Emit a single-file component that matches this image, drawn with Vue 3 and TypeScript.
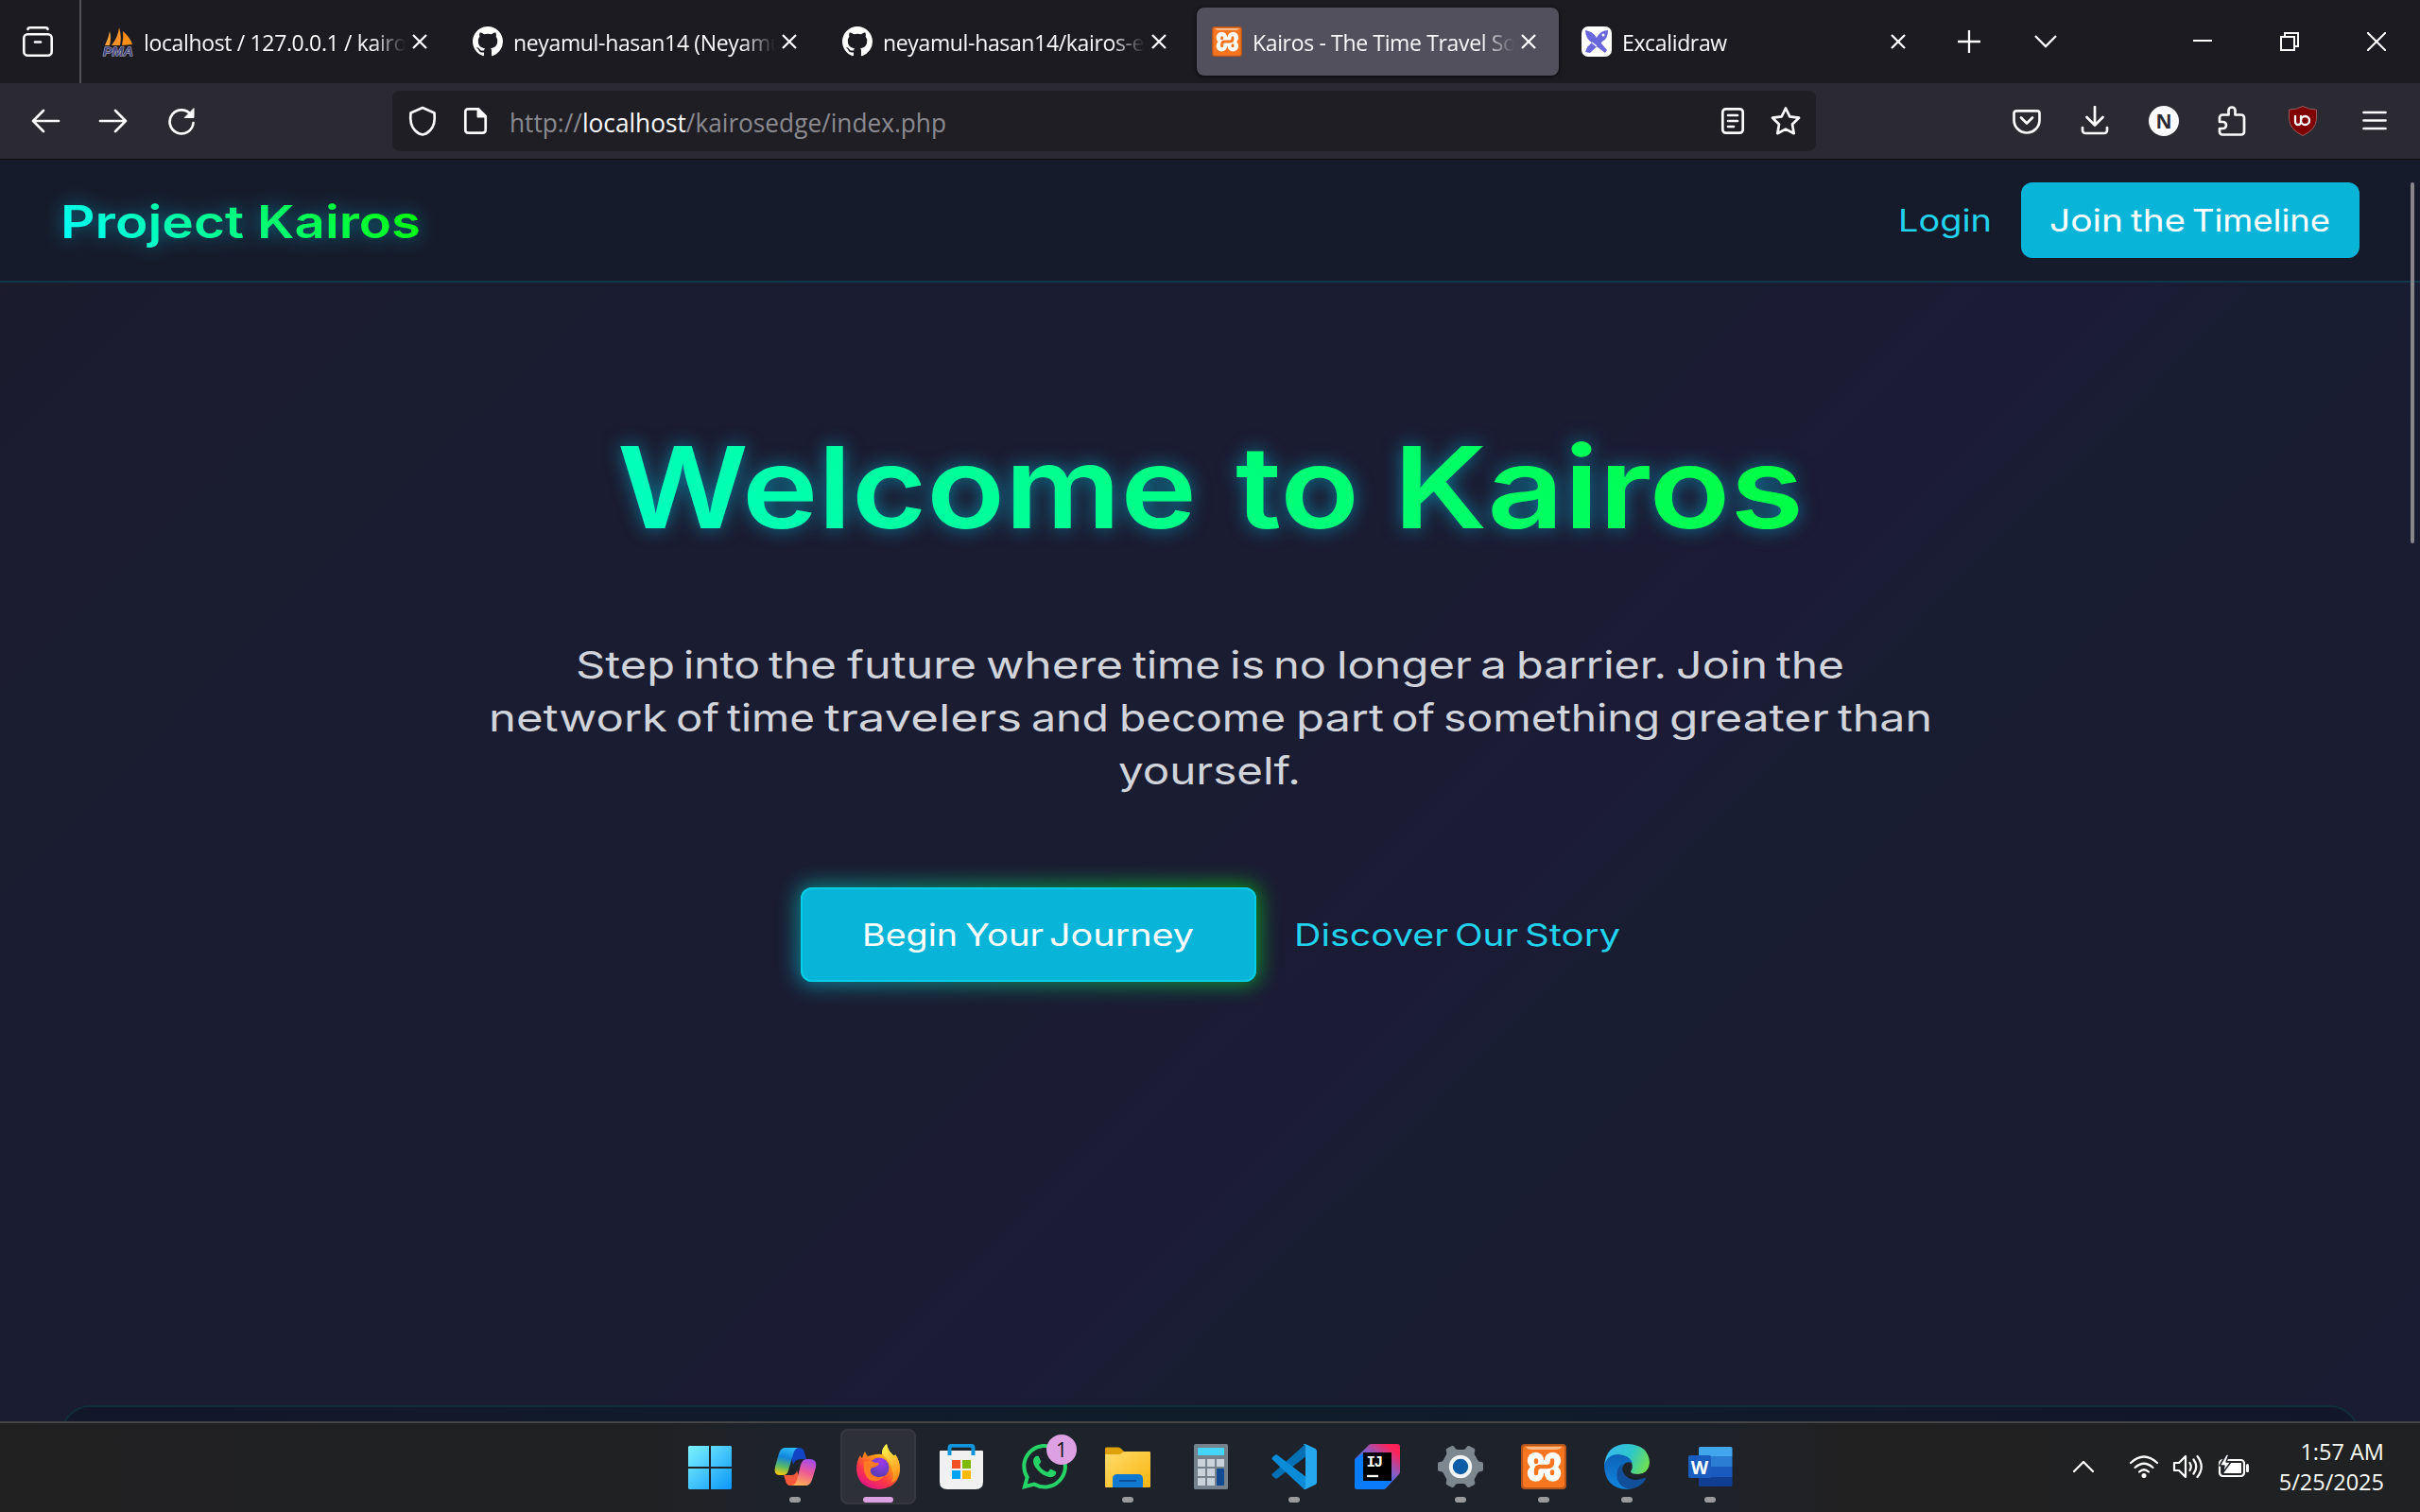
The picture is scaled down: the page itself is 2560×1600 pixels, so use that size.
<script setup lang="ts">
import { h } from 'vue'

type Word = [text: string, x: number, width: number]

// Sets each word at its own measure so the stretched lettering keeps its rhythm.
const Words = (props: { items: Word[]; y: number }) =>
  h(
    'g',
    props.items.map(([text, x, width]) =>
      h('text', { x: x - 2, y: props.y, textLength: width + 4, lengthAdjust: 'spacingAndGlyphs' }, text),
    ),
  )
Words.props = ['items', 'y']

const tabs = [
  { icon: 'pma', title: 'localhost / 127.0.0.1 / kairosedge', active: false },
  { icon: 'github', title: 'neyamul-hasan14 (Neyamul Hasan)', active: false },
  { icon: 'github', title: 'neyamul-hasan14/kairos-edge', active: false },
  { icon: 'xampp', title: 'Kairos - The Time Travel Society', active: true },
  { icon: 'excalidraw', title: 'Excalidraw', active: false },
]

const logo: Word[] = [['Project', 66, 190], ['Kairos', 274, 169]]
const login: Word[] = [['Login', 2010, 95]]
const join: Word[] = [['Join', 2170, 74], ['the', 2256, 54], ['Timeline', 2321, 142]]
const headline: Word[] = [['Welcome', 655, 609], ['to', 1309, 127], ['Kairos', 1476, 430]]
const intro: { y: number; words: Word[] }[] = [
  { y: 718, words: [['Step', 611, 101], ['into', 725, 77], ['the', 815, 68], ['future', 898, 133], ['where', 1045, 141], ['time', 1200, 89], ['is', 1303, 33], ['no', 1349, 52], ['longer', 1416, 139], ['a', 1568, 24], ['barrier.', 1606, 155], ['Join', 1775, 93], ['the', 1881, 68]] },
  { y: 774, words: [['network', 519, 185], ['of', 717, 42], ['time', 771, 89], ['travelers', 874, 205], ['and', 1093, 78], ['become', 1186, 172], ['part', 1373, 89], ['of', 1474, 42], ['something', 1529, 225], ['greater', 1768, 165], ['than', 1946, 96]] },
  { y: 830, words: [['yourself.', 1185, 189]] },
]
const begin: Word[] = [['Begin', 914, 97], ['Your', 1023, 79], ['Journey', 1112, 149]]
const discover: Word[] = [['Discover', 1371, 159], ['Our', 1541, 63], ['Story', 1615, 97]]

const apps = [
  { id: 'copilot', run: true }, { id: 'firefox', run: false, active: true }, { id: 'store' }, { id: 'whatsapp' },
  { id: 'files', run: true }, { id: 'calc' }, { id: 'code', run: true }, { id: 'idea' },
  { id: 'settings', run: true }, { id: 'xampp', run: true }, { id: 'edge', run: true }, { id: 'word', run: true },
]
</script>

<template>
  <div class="screen">
    <div class="tabbar">
      <div class="view">
        <svg width="32" height="32" viewBox="0 0 32 32" fill="none" stroke="#fbfbfe" stroke-width="2.6" stroke-linecap="round">
          <path d="M5.500 3V3a2 2 0 0 1 2-1.700h17a2 2 0 0 1 2 1.700" /><rect x="1.300" y="8.300" width="29.400" height="22.400" rx="4" /><path d="M13 16.500h6" />
        </svg>
      </div>
      <div class="tabs">
        <div v-for="(t, i) in tabs" :key="i" class="tab" :class="{ active: t.active }">
          <svg v-if="t.icon === 'github'" class="fav" viewBox="0 0 16 16" fill="#fff"><path d="M8 0C3.58 0 0 3.58 0 8c0 3.54 2.29 6.53 5.47 7.59.4.07.55-.17.55-.38 0-.19-.01-.82-.01-1.49-2.01.37-2.53-.49-2.69-.94-.09-.23-.48-.94-.82-1.13-.28-.15-.68-.52-.01-.53.63-.01 1.08.58 1.23.82.72 1.21 1.87.87 2.33.66.07-.52.28-.87.51-1.07-1.78-.2-3.64-.89-3.64-3.95 0-.87.31-1.59.82-2.15-.08-.2-.36-1.02.08-2.12 0 0 .67-.21 2.2.82.64-.18 1.32-.27 2-.27s1.36.09 2 .27c1.53-1.04 2.2-.82 2.2-.82.44 1.1.16 1.92.08 2.12.51.56.82 1.27.82 2.15 0 3.07-1.87 3.75-3.65 3.95.29.25.54.73.54 1.48 0 1.07-.01 1.93-.01 2.2 0 .21.15.46.55.38A8.01 8.01 0 0 0 16 8c0-4.42-3.58-8-8-8z" /></svg>
          <svg v-else-if="t.icon === 'pma'" class="fav" viewBox="0 0 32 32">
            <path d="M2 20Q6 12 7 5Q9 12 7 20Z" fill="#f9a13a" /><path d="M9 20Q16 11 17 1Q20 11 18 20Z" fill="#f7922a" /><path d="M20 20Q22 12 21 5Q29 12 31 19Z" fill="#f98d16" />
            <text x="0" y="30.500" textLength="32" lengthAdjust="spacingAndGlyphs" class="pma">PMA</text>
          </svg>
          <svg v-else-if="t.icon === 'xampp'" class="fav" viewBox="0 0 48 48"><use href="#xampp" /></svg>
          <svg v-else class="fav" viewBox="0 0 32 32">
            <rect width="32" height="32" rx="7" fill="#fff" />
            <path d="M4 4Q12 5 16 12L27 25L25 28L12 18Q4 13 4 4Z" fill="#6965db" /><path d="M28 4Q28 13 22 16L9 28L4 27L6 22L16 12Q20 4 28 4Z" fill="#6965db" /><circle cx="23" cy="9" r="1.500" fill="#fff" /><path d="M11 17L16 21" stroke="#fff" stroke-width="1.300" />
          </svg>
          <span class="title">{{ t.title }}</span>
          <svg class="x" viewBox="0 0 16 16"><path d="M1 1L15 15M15 1L1 15" /></svg>
        </div>
      </div>
      <svg class="plus" width="24" height="24" viewBox="0 0 24 24"><path d="M12 0V24M0 12H24" /></svg>
      <svg class="down" width="26" height="16" viewBox="0 0 26 16"><path d="M2 2L13 13L24 2" /></svg>
      <div class="wincontrols">
        <svg width="20" height="20" viewBox="0 0 20 20"><path d="M0 9H20" /></svg>
        <svg width="20" height="20" viewBox="0 0 20 20"><path d="M1 5H15V19H1ZM5 5V1H19V15H15" /></svg>
        <svg width="20" height="20" viewBox="0 0 20 20"><path d="M0 0L20 20M20 0L0 20" /></svg>
      </div>
    </div>

    <div class="toolbar">
      <div class="nav">
        <svg viewBox="0 0 32 32"><path d="M30 16H3M14 5L3 16L14 27" /></svg>
        <svg viewBox="0 0 32 32"><path d="M2 16H29M18 5L29 16L18 27" /></svg>
        <svg viewBox="0 0 32 32"><path d="M26.500 10A12.500 12.500 0 1 0 28.500 18" /><path d="M29 3V12.500H19.500Z" fill="#fbfbfe" stroke-width="1" /></svg>
      </div>
      <div class="urlbar">
        <svg class="ic" viewBox="0 0 32 32"><path d="M16 2L28.500 7.500Q30 20 24 26Q20 30 16 30.500Q12 30 8 26Q2 20 3.500 7.500Z" /></svg>
        <svg class="ic page" viewBox="0 0 32 32"><path d="M8 3.300H19L26.700 11V25.700a3 3 0 0 1-3 3H8.300a3 3 0 0 1-3-3V6a2.700 2.700 0 0 1 2.700-2.700Z" /><path d="M18 3V12H27Z" fill="#fbfbfe" stroke-width="1" /></svg>
        <svg class="url" width="480" height="64" viewBox="536 96 480 64"><text x="539" y="140" textLength="462" lengthAdjust="spacingAndGlyphs">http://<tspan fill="#fbfbfe">localhost</tspan>/kairosedge/index.php</text></svg>
        <svg class="ic reader" viewBox="0 0 32 32"><rect x="5.300" y="3.300" width="21.400" height="25.400" rx="3.500" /><path d="M11 10H21M11 16H21M11 22H17" /></svg>
        <svg class="ic" viewBox="0 0 32 32"><path d="M16 2.500L20.300 11.300L30 12.700L23 19.500L24.700 29.200L16 24.600L7.300 29.200L9 19.500L2 12.700L11.700 11.300Z" /></svg>
      </div>
      <div class="ext">
        <svg viewBox="0 0 32 32"><path d="M5 5.300H27a2.500 2.500 0 0 1 2.500 2.500V15a13.500 13.500 0 0 1-27 0V7.800A2.500 2.500 0 0 1 5 5.300Z" /><path d="M10 12.500L16 18.500L22 12.500" /></svg>
        <svg viewBox="0 0 32 32"><path d="M16 1V20M7.500 12L16 20.500L24.500 12M3 23V26a3 3 0 0 0 3 3H26a3 3 0 0 0 3-3V23" /></svg>
        <svg viewBox="0 0 32 32"><circle cx="16" cy="16" r="16" fill="#fbfbfe" stroke="none" /><text x="16" y="23.500" text-anchor="middle" class="n">N</text></svg>
        <svg viewBox="0 0 32 32"><path d="M12.500 9.500V5a3.500 3.500 0 0 1 7 0V9.500H26a3 3 0 0 1 3 3V27.500a3 3 0 0 1-3 3H6a3 3 0 0 1-3-3V24H6.500a3.500 3.500 0 0 0 0-7H3V12.500a3 3 0 0 1 3-3Z" /></svg>
        <svg class="ublock" viewBox="0 0 32 32"><path d="M16 .5Q22 4 30.500 4V14Q30 25 16 31.500Q2 25 1.500 14V4Q10 4 16 .5Z" fill="#800000" stroke="#9a5a5c" stroke-width="1" /><path d="M8 11V17a3 3 0 0 0 6 0V11M14 15.500a4 4 0 1 0 9 0a4 4 0 1 0-9 0" stroke-width="2.300" /></svg>
        <svg class="menu" viewBox="0 0 32 32"><path d="M4.500 7H27.500M4.500 15.500H27.500M4.500 24H27.500" /></svg>
      </div>
    </div>

    <div class="page">
      <header>
        <svg class="logo orb" width="500" height="128" viewBox="0 169 500 128">
          <defs><linearGradient id="g1" gradientUnits="userSpaceOnUse" x1="146" y1="340" x2="360" y2="126"><stop stop-color="#00ffff" /><stop offset="1" stop-color="#00ff00" /></linearGradient></defs>
          <Words :items="logo" :y="252" />
        </svg>
        <div class="account">
          <svg class="orb login" width="100" height="80" viewBox="2008 193 100 80"><Words :items="login" :y="245" /></svg>
          <a class="join"><svg class="orb white" width="358" height="80" viewBox="2138 193 358 80"><Words :items="join" :y="245" /></svg></a>
        </div>
      </header>
      <main>
        <svg class="headline orb" width="1400" height="160" viewBox="580 430 1400 160">
          <defs><linearGradient id="g2" gradientUnits="userSpaceOnUse" x1="625" y1="1165" x2="1935" y2="-145"><stop stop-color="#00ffff" /><stop offset="1" stop-color="#00ff00" /></linearGradient></defs>
          <Words :items="headline" :y="559" />
        </svg>
        <svg class="intro orb" width="1560" height="190" viewBox="500 670 1560 190">
          <Words v-for="l in intro" :key="l.y" :items="l.words" :y="l.y" />
        </svg>
        <div class="actions">
          <a class="begin"><svg class="orb white" width="482" height="100" viewBox="847 939 482 100"><Words :items="begin" :y="1000.5" /></svg></a>
          <svg class="orb login" width="344" height="100" viewBox="1369 939 344 100"><Words :items="discover" :y="1000.5" /></svg>
        </div>
        <section class="card"></section>
      </main>
      <div class="scroll"></div>
    </div>

    <div class="taskbar">
      <div class="side"></div>
      <div class="apps">
        <div class="cell start">
          <svg width="46" height="46" viewBox="0 0 46 46">
            <defs><linearGradient id="win" gradientUnits="userSpaceOnUse" x1="0" y1="0" x2="46" y2="46"><stop stop-color="#7df4ff" /><stop offset="1" stop-color="#0a96f8" /></linearGradient></defs>
            <path fill="url(#win)" d="M1 0H22V22H0V1ZM24 0H45L46 1V22H24ZM0 24H22V46H1L0 45ZM24 24H46V45L45 46H24Z" />
          </svg>
        </div>
        <div v-for="a in apps" :key="a.id" class="cell" :class="{ active: a.active }">
          <svg v-if="a.id === 'copilot'" width="48" height="48" viewBox="0 0 48 48">
            <defs>
              <linearGradient id="cp1" x1="0.500" y1="0" x2="0.300" y2="1"><stop stop-color="#28b8f5" /><stop offset=".35" stop-color="#1484dc" /><stop offset=".7" stop-color="#5dbb63" /><stop offset="1" stop-color="#f6c90e" /></linearGradient>
              <linearGradient id="cp2" x1="0.700" y1="0" x2="0.400" y2="1"><stop stop-color="#a44cf0" /><stop offset=".5" stop-color="#ee5a92" /><stop offset="1" stop-color="#ffae55" /></linearGradient>
            </defs>
            <path d="M18 4H28Q33 4 34 9L36 16H30Q24 16 22 22Z" fill="#1245c4" />
            <path d="M12 33H20Q25 33 26 28L29 38Q27 44 22 44H19Q15 44 14 39Z" fill="#f4583c" />
            <path d="M13 4H27Q23 6 22 11L17 28Q16 33 11 33H8Q1 33 3 24L7 10Q9 4 13 4Z" fill="url(#cp1)" />
            <path d="M36 16H39Q48 16 46 25L42 38Q40 44 35 44H20Q25 43 26 38L30 22Q32 16 36 16Z" fill="url(#cp2)" />
          </svg>
          <svg v-else-if="a.id === 'firefox'" width="48" height="48" viewBox="0 0 48 48">
            <defs>
              <linearGradient id="ff1" x1=".85" y1=".1" x2=".3" y2="1"><stop stop-color="#fff44f" /><stop offset=".35" stop-color="#ff980e" /><stop offset=".7" stop-color="#ff3647" /><stop offset="1" stop-color="#e31587" /></linearGradient>
              <linearGradient id="ff2" x1=".3" y1="0" x2=".7" y2="1"><stop stop-color="#fff44f" /><stop offset="1" stop-color="#ff8a16" /></linearGradient>
              <radialGradient id="ff3" cx=".6" cy=".2" r=".9"><stop stop-color="#a238e8" /><stop offset="1" stop-color="#4b3fae" /></radialGradient>
            </defs>
            <path d="M10 8Q11 11 13 13L17 12Q24 10 28 11Q28 4 33 0Q34 7 40 12Q42 13 42 11Q47 18 47 27Q46 47 24 48Q2 46 1 27Q1 18 5 12Q6 15 7 15Q8 11 10 8Z" fill="url(#ff1)" />
            <path d="M28 10Q28 4 33 0Q34 7 40 12Q42 13 42 11Q47 18 47 27Q46 37 38 41Q42 32 37 22Q34 16 28 10Z" fill="url(#ff2)" />
            <circle cx="25" cy="25" r="10.500" fill="url(#ff3)" />
            <path d="M9 19Q15 16 21 20Q24 19 25 21Q23 24 18 25Q14 27 17 32Q22 37 30 34Q24 42 15 38Q7 32 9 19Z" fill="#ff7a25" />
          </svg>
          <svg v-else-if="a.id === 'store'" width="48" height="48" viewBox="0 0 48 48">
            <path d="M1 8Q1 7 2 7H46Q47 7 47 8V40Q47 48 39 48H9Q1 48 1 40Z" fill="#f1f1f1" /><path d="M11.500 12V4Q11.500 1.800 14 1.800H34Q36.500 1.800 36.500 4V12" fill="none" stroke="#1095dc" stroke-width="4" />
            <path fill="#f25022" d="M14 17H23V26H14Z" /><path fill="#7fba00" d="M25 17H34V26H25Z" /><path fill="#00a4ef" d="M14 28H23V37H14Z" /><path fill="#ffb900" d="M25 28H34V37H25Z" />
          </svg>
          <template v-else-if="a.id === 'whatsapp'">
            <svg width="48" height="48" viewBox="0 0 24 24" fill="#25d366"><path d="M17.472 14.382c-.297-.149-1.758-.867-2.03-.967-.273-.099-.471-.148-.67.15-.197.297-.767.966-.94 1.164-.173.199-.347.223-.644.075-.297-.15-1.255-.463-2.39-1.475-.883-.788-1.48-1.761-1.653-2.059-.173-.297-.018-.458.13-.606.134-.133.298-.347.446-.52.149-.174.198-.298.298-.497.099-.198.05-.371-.025-.52-.075-.149-.669-1.612-.916-2.207-.242-.579-.487-.5-.669-.51-.173-.008-.371-.01-.57-.01-.198 0-.52.074-.792.372-.272.297-1.04 1.016-1.04 2.479 0 1.462 1.065 2.875 1.213 3.074.149.198 2.096 3.2 5.077 4.487.709.306 1.262.489 1.694.625.712.227 1.36.195 1.871.118.571-.085 1.758-.719 2.006-1.413.248-.694.248-1.289.173-1.413-.074-.124-.272-.198-.57-.347m-5.421 7.403h-.004a9.87 9.87 0 01-5.031-1.378l-.361-.214-3.741.982.998-3.648-.235-.374a9.86 9.86 0 01-1.51-5.26c.001-5.45 4.436-9.884 9.888-9.884 2.64 0 5.122 1.03 6.988 2.898a9.825 9.825 0 012.893 6.994c-.003 5.45-4.437 9.884-9.885 9.884m8.413-18.297A11.815 11.815 0 0012.05 0C5.495 0 .16 5.335.157 11.892c0 2.096.547 4.142 1.588 5.945L.057 24l6.305-1.654a11.882 11.882 0 005.683 1.448h.005c6.554 0 11.89-5.335 11.893-11.893a11.821 11.821 0 00-3.48-8.413z" /></svg>
            <span class="badge">1</span>
          </template>
          <svg v-else-if="a.id === 'files'" width="48" height="48" viewBox="0 0 48 48">
            <defs><linearGradient id="fo" x1="0" y1="0" x2="1" y2="1"><stop stop-color="#ffdc6b" /><stop offset="1" stop-color="#f9b50f" /></linearGradient></defs>
            <path d="M0 5Q0 3.500 1.500 3.500H14Q15.500 3.500 17 5L20 8V16H0Z" fill="#e0a00a" /><path d="M0 11H14Q16 11 18 9.500L19 8.500Q20 8 21 8H47Q48 8 48 9V45Q48 46 47 46H1Q0 46 0 45Z" fill="url(#fo)" />
            <path d="M8 46V37Q8 32 13 32H35Q40 32 40 37V46Z" fill="#0f78cf" /><path d="M15 39H33" stroke="#0a4e9c" stroke-width="2" />
          </svg>
          <svg v-else-if="a.id === 'calc'" width="36" height="48" viewBox="0 0 36 48">
            <rect width="36" height="48" rx="1.500" fill="#75818c" /><rect x="4" y="4" width="28" height="8" rx="1" fill="#45d5f8" />
            <path fill="#c9d2da" d="M4 16h8v8H4zM14 16h8v8h-8zM24 16h8v8h-8zM4 26h8v8H4zM14 26h8v8h-8zM4 36h8v8H4zM14 36h8v8h-8z" /><rect x="24" y="26" width="8" height="18" rx="1" fill="#124a92" />
          </svg>
          <svg v-else-if="a.id === 'code'" width="48" height="48" viewBox="0 0 48 48">
            <path d="M36 0L1 31.500Q0 33 1 34L4 36.500Q5 37 6 36.500L36 13.500Z" fill="#0070b5" /><path d="M6 11.500Q5 11 4 11.500L1 14Q0 15 1 16.500L33 46.500Q34.500 48 36 48V34.500Z" fill="#0b8cd8" /><path d="M36 0L46.500 5Q48 6 48 7.500V40.500Q48 42 46.500 43L36 48Q34 48 33 47Q36 48 36 45V3Q36 0 33 1Q34 0 36 0Z" fill="#25a8ee" />
          </svg>
          <svg v-else-if="a.id === 'idea'" width="48" height="48" viewBox="0 0 48 48">
            <defs><linearGradient id="ij" gradientUnits="userSpaceOnUse" x1="16" y1="36" x2="42" y2="4"><stop offset=".15" stop-color="#3b6cf6" /><stop offset=".5" stop-color="#8a5cc2" /><stop offset=".95" stop-color="#ff2258" /></linearGradient></defs>
            <path d="M18 0H45Q48 0 48 3V29Q48 31 47 32L33 47Q32 48 30 48H3Q0 48 0 45V18Q0 16 1 15L15 1Q16 0 18 0Z" fill="url(#ij)" /><path d="M0 17L10 9V38H40L31 48H3Q0 48 0 45Z" fill="#087cfa" />
            <rect x="9" y="9" width="30" height="30" /><path d="M13 34H25" stroke="#fff" stroke-width="2.300" /><text x="12.500" y="24" class="ij">IJ</text>
          </svg>
          <svg v-else-if="a.id === 'settings'" width="48" height="48" viewBox="0 0 48 48">
            <path d="M15 2Q17 1.500 18 4Q19 6 21 6H27Q29 6 30 4Q31 1.500 33 2L38 4.500Q40 5.500 39 8Q38 11 40 13L42 17Q43 19 46 19Q48 19 48 21V27Q48 29 46 29Q43 29 42 31L40 35Q38 37 39 40Q40 42.500 38 43.500L33 46Q31 46.500 30 44Q29 42 27 42H21Q19 42 18 44Q17 46.500 15 46L10 43.500Q8 42.500 9 40Q10 37 8 35L6 31Q5 29 2 29Q0 29 0 27V21Q0 19 2 19Q5 19 6 17L8 13Q10 11 9 8Q8 5.500 10 4.500Z" fill="#7c8790" /><circle cx="24" cy="24" r="10.200" fill="#0d5ca8" stroke="#f2f3f4" stroke-width="4" />
          </svg>
          <svg v-else-if="a.id === 'xampp'" width="48" height="48" viewBox="0 0 48 48">
            <g id="xampp">
              <rect width="48" height="48" rx="4" fill="#b5561c" /><rect x="2" y="2" width="44" height="44" rx="3" fill="#f8751f" /><path d="M5 3H43Q42 6 36 6H12Q6 6 5 3Z" fill="#fbb98c" />
              <g fill="#fff"><circle cx="15.500" cy="17.500" r="8.700" /><circle cx="33.500" cy="17.500" r="8.700" /><circle cx="15.500" cy="31" r="8.700" /><circle cx="33.500" cy="31" r="8.700" /><rect x="12" y="17" width="25" height="14" /></g>
              <path d="M16 17.500V19M33 17.500V19Q33 24 28 24H20Q16 24 16 29V31M33 29.500V31" fill="none" stroke="#f8751f" stroke-width="4.500" stroke-linecap="round" />
            </g>
          </svg>
          <svg v-else-if="a.id === 'edge'" width="48" height="48" viewBox="0 0 48 48">
            <defs><linearGradient id="ed" x1="0" y1=".3" x2="1" y2=".6"><stop stop-color="#35b8f1" /><stop offset=".55" stop-color="#2fc7c9" /><stop offset="1" stop-color="#6fe04f" /></linearGradient><linearGradient id="ed2" x1="0" y1="0" x2="0" y2="1"><stop stop-color="#0c62b8" /><stop offset="1" stop-color="#1187dd" /></linearGradient></defs>
            <path d="M0 23Q2 0 25 0Q47 1 48 20Q47 31 36 32Q28 32 28 29Q31 25 29 20Q26 14 18 12Q5 12 0 23Z" fill="url(#ed)" />
            <path d="M0 23Q3 11 15 11Q27 12 30 20Q20 17 19 27Q19 42 33 45Q29 48 24 48Q1 47 0 23Z" fill="url(#ed2)" />
            <path d="M20 20Q11 27 14 38Q18 48 29 47.500Q40 45 44 37Q44 35 42 36Q31 41 23 34Q17 28 20 20Z" fill="#114f9b" />
          </svg>
          <svg v-else width="48" height="48" viewBox="0 0 48 48">
            <path d="M12 13V4.500Q12 3 13.500 3H46Q47.500 3 47.500 4.500V13Z" fill="#41a5ee" /><path d="M12 13H47.500V24H12Z" fill="#2b7cd3" /><path d="M12 24H47.500V35H12Z" fill="#185abd" /><path d="M12 35H47.500V43.500Q47.500 45 46 45H13.500Q12 45 12 43.500Z" fill="#103f91" />
            <rect x="1" y="12" width="24" height="24" rx="2" fill="#1a5dbe" /><text x="13" y="31.500" text-anchor="middle" class="w">W</text>
          </svg>
          <span v-if="a.run || a.active" class="dot"></span>
        </div>
      </div>
      <div class="side tray">
        <svg width="22" height="14" viewBox="0 0 22 14"><path d="M1 12L11 2L21 12" /></svg>
        <div class="status">
          <svg width="32" height="28" viewBox="0 0 32 28"><path d="M2 10Q16-3 30 10" /><path d="M6.500 15Q16 6.500 25.500 15" /><path d="M11 19.500Q16 15 21 19.500" /><circle cx="16" cy="23.500" r="2.500" fill="#fff" stroke="none" /></svg>
          <svg width="34" height="28" viewBox="0 0 34 28"><path d="M2 10H7L14 3V25L7 18H2Z" /><path d="M18.500 10Q21 14 18.500 18M22.500 6.500Q28 14 22.500 21.500M26.500 3Q35 14 26.500 25" /></svg>
          <svg width="34" height="28" viewBox="0 0 34 28"><rect x="2" y="7" width="26" height="17" rx="3.500" /><path d="M31.500 12.500V18.500" stroke-width="3" /><path d="M12 10H25V21H6Z" fill="#fff" stroke="none" /><path d="M9 1L2 13H7L5 21L14 9H9L12 1Z" fill="#fff" stroke="#1e2128" stroke-width="1.500" /></svg>
        </div>
        <div class="clock"><span>1:57 AM</span><span>5/25/2025</span></div>
      </div>
    </div>
  </div>
</template>

<style>
body { margin: 0; overflow: hidden; background: #1c1b22; }
</style>

<style scoped>
.screen { width: 2560px; height: 1600px; display: flex; flex-direction: column; overflow: hidden; font-family: "Open Sans", "Noto Sans", sans-serif; color: #fbfbfe; }
.screen svg { display: block; flex: none; }
.tabbar { height: 88px; background: #1c1b22; display: flex; align-items: center; flex: none; }
.view { width: 86px; height: 88px; border-right: 2px solid #53525a; padding-left: 24px; box-sizing: border-box; display: flex; align-items: center; margin-right: 7px; }
.tabs { display: flex; gap: 8px; }
.tab { width: 383px; height: 72px; box-sizing: border-box; padding: 0 24px 0 16px; display: flex; align-items: center; border-radius: 8px; }
.tab.active { background: #52505c; box-shadow: 0 1px 4px #08080c; }
.fav { width: 32px; height: 32px; overflow: visible; }
.title { flex: 1; min-width: 0; margin: 0 4px 0 11px; padding-top: 2px; font-size: 23px; letter-spacing: -0.35px; line-height: 32px; white-space: nowrap; overflow: hidden; -webkit-mask-image: linear-gradient(90deg, #000 calc(100% - 38px), transparent calc(100% - 3px)); mask-image: linear-gradient(90deg, #000 calc(100% - 38px), transparent calc(100% - 3px)); }
.x { width: 16px; height: 16px; }
.x path, .plus path, .down path { fill: none; stroke: #fbfbfe; stroke-width: 2.3; }
.plus { margin-left: 31px; }
.down { margin-left: 56px; }
.wincontrols { display: flex; gap: 72px; margin-left: auto; margin-right: 36px; }
.wincontrols path { fill: none; stroke: #fff; stroke-width: 2; }
.pma { font: italic 900 13.500px "Liberation Sans", sans-serif; fill: #43457e; stroke: #c9c9da; stroke-width: .9; paint-order: stroke; }
.toolbar { height: 80px; background: #2b2a33; border-bottom: 1px solid #0c0c0f; display: flex; align-items: center; flex: none; }
.toolbar svg path, .toolbar svg rect { stroke-linecap: round; stroke-linejoin: round; }
.nav { display: flex; gap: 40px; margin-left: 32px; width: 383px; }
.nav svg { width: 32px; height: 32px; fill: none; stroke: #fbfbfe; stroke-width: 2.7; }
.urlbar { width: 1506px; height: 64px; box-sizing: border-box; padding: 0 16px; border-radius: 8px; background: #1f1e25; display: flex; align-items: center; }
.ic { width: 32px; height: 32px; fill: none; stroke: #fbfbfe; stroke-width: 2.7; }
.page.ic { margin-left: 24px; }
.url { margin-left: 17px; font-size: 26.500px; fill: #8b8a91; }
.reader { margin-left: auto; margin-right: 24px; }
.ext { display: flex; margin-left: auto; margin-right: 32px; gap: 40.500px; }
.ext svg { width: 32px; height: 32px; fill: none; stroke: #fbfbfe; stroke-width: 2.7; }
.ext .ublock { margin-left: 2px; }
.ext .menu { margin-left: 4px; }
.n { font: bold 21px "Open Sans", sans-serif; fill: #2b2a33; stroke: none; }
.page:not(.ic) { height: 1335px; flex: none; position: relative; overflow: hidden; background: linear-gradient(135deg, #1b1b2d 0%, #1a1c30 18%, #1a1c32 50%, #1b1b35 59%, #1b1b36 61%, #191d32 65%, #1a1c31 80%, #1a1c33 100%); }
header { height: 128px; border-bottom: 2px solid #12364a; background: #161b2b; display: flex; justify-content: space-between; align-items: center; }
.orb { font-family: Inter, "DejaVu Sans", sans-serif; font-size: 32px; overflow: visible; }
.logo { font-size: 48px; font-weight: 600; fill: url(#g1); filter: drop-shadow(0 0 10px rgba(0, 212, 255, .45)); }
.account { display: flex; gap: 30px; margin-right: 64px; }
.login { fill: #22d3ee; }
.white { fill: #fff; }
.join { width: 358px; height: 80px; border-radius: 12px; background: #08b5d8; }
main { display: flex; flex-direction: column; align-items: center; height: 1205px; }
.headline { margin-top: 131px; font-size: 120px; font-weight: 600; fill: url(#g2); filter: drop-shadow(0 0 10px rgba(0, 212, 255, .5)); }
.intro { margin-top: 80px; font-size: 40px; fill: #d1d5db; }
.actions { margin-top: 79px; display: flex; gap: 40px; position: relative; z-index: 0; }
.begin { width: 482px; height: 100px; border-radius: 12px; background: #08b5d8; box-shadow: inset 0 0 0 2px #06cde4; position: relative; }
.begin::before { content: ""; position: absolute; inset: -3px; z-index: -1; border-radius: 14px; background: linear-gradient(45deg, #00d5ff, #00ff00); filter: blur(11px); opacity: .55; }
.card { width: 2432px; height: 200px; flex: none; box-sizing: border-box; margin-top: 448px; border: 2px solid #112c3a; border-radius: 32px; background: linear-gradient(90deg, #12172a, #0f1d2b 50%, #12162a); }
.scroll { position: absolute; right: 6px; top: 24px; width: 4px; height: 382px; border-radius: 2px; background: #87868a; }
.taskbar { height: 96px; flex: none; box-sizing: border-box; border-top: 2px solid #454547; background: linear-gradient(90deg, #212122 0%, #202123 27%, #1e222a 32%, #1e222a 70%, #212122 76%, #202122 100%); display: flex; }
.side { width: 711px; box-sizing: border-box; flex: none; }
.apps { display: flex; gap: 8px; padding-top: 6px; }
.cell { width: 80px; height: 80px; display: flex; align-items: center; justify-content: center; position: relative; border-radius: 8px; }
.cell.start { margin-right: 2px; padding-top: 1px; box-sizing: border-box; }
.cell.active { background: #2d3036; box-shadow: inset 0 0 0 2px #36383d; }
.dot { position: absolute; bottom: 2px; left: 34px; width: 12px; height: 6px; border-radius: 3px; background: #9b9b9f; }
.active .dot { left: 24px; width: 32px; background: #dda0e3; }
.badge { position: absolute; left: 42px; top: 6px; width: 32px; height: 32px; border-radius: 50%; background: #dda0e3; color: #111; font-size: 21px; line-height: 32px; text-align: center; }
.ij { font: bold 16px "Liberation Mono", monospace; fill: #fff; letter-spacing: -1.500px; }
.w { font: bold 19px "Open Sans", sans-serif; fill: #fff; }
.tray { display: flex; align-items: center; justify-content: flex-end; padding-right: 38px; padding-bottom: 2px; }
.tray svg { fill: none; stroke: #fff; stroke-width: 2.2; stroke-linejoin: round; stroke-linecap: round; }
.status { display: flex; gap: 14px; margin-left: 37px; margin-right: 31px; }
.clock { display: flex; flex-direction: column; align-items: flex-end; font-size: 23.500px; letter-spacing: 0; line-height: 32px; color: #fff; }
</style>
